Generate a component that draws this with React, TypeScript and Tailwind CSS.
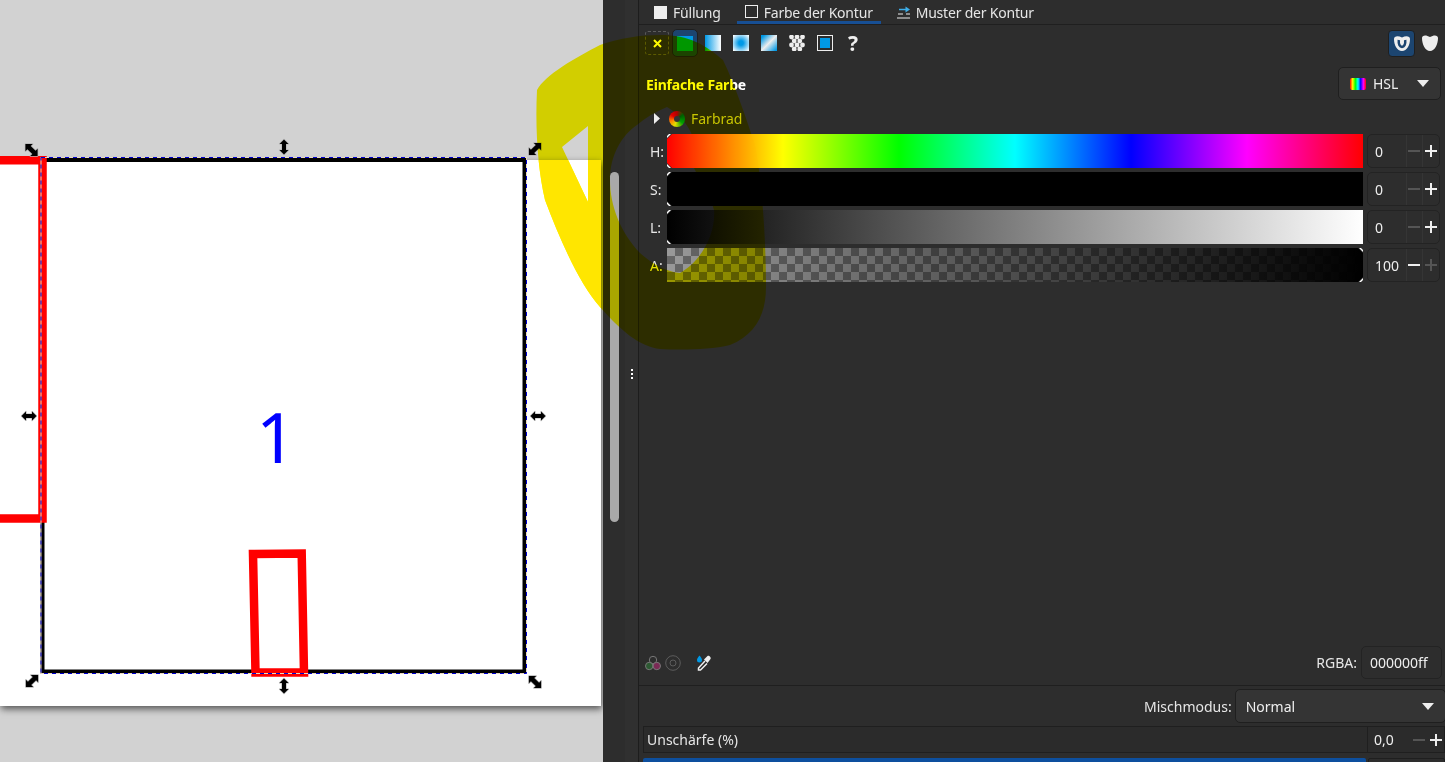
import React from 'react';

const blobPath =
  'M537,90 C545,75 575,58 600,45 C620,38 640,35 660,35 C690,35 705,45 723,60 C735,85 745,115 755,145 C762,180 766,240 766,287 C766,315 755,335 730,345 C710,350 680,350 660,349 C640,347 620,330 600,307 C580,285 560,240 545,200 C538,170 535,130 537,90 Z ' +
  'M588,126 L562,147 L588,202 Z ' +
  'M667,107 C680,115 688,125 692,135 C694,150 694,158 694,168 C702,185 710,195 714,210 C716,235 700,262 680,273 C665,272 650,262 640,253 C620,232 610,205 610,180 C610,155 622,135 637,125 C645,118 655,112 667,107 Z';

const Handle = ({ x, y, rot, scale = 1 }: { x: number; y: number; rot: number; scale?: number }) => (
  <path
    transform={`translate(${x} ${y}) rotate(${rot}) scale(${scale})`}
    d="M-7.5,0 L-3,-4.5 L-3,-2 L3,-2 L3,-4.5 L7.5,0 L3,4.5 L3,2 L-3,2 L-3,4.5 Z"
    fill="#000"
    stroke="#b5b5b5"
    strokeWidth="1.2"
    paintOrder="stroke"
    strokeLinejoin="round"
  />
);

const Canvas = () => (
  <div className="relative h-full w-[603px] shrink-0 overflow-hidden bg-[#d2d2d2]">
    <div className="absolute left-0 top-[160px] h-[546px] w-[601px] bg-white shadow-[1px_3px_7px_rgba(0,0,0,0.6)]" />
    <svg className="absolute inset-0" width="603" height="762" viewBox="0 0 603 762">
      <rect x="42.5" y="160" width="482" height="511.5" fill="none" stroke="#000" strokeWidth="4" />
      <path d="M-20,160.2 H42.5 V518.5 H-20" fill="none" stroke="#ff0000" strokeWidth="8.5" />
      <polygon points="253,554 301.7,553.5 304,672.5 255.5,672.5" fill="none" stroke="#ff0000" strokeWidth="8.5" />
      <rect x="41" y="157.5" width="485.5" height="516" fill="none" stroke="#e8d8c0" strokeWidth="1" />
      <rect x="41" y="157.5" width="485.5" height="516" fill="none" stroke="#0000d0" strokeWidth="1" strokeDasharray="4 4" />
      <Handle x={31.5} y={150} rot={45} scale={1.15} />
      <Handle x={284} y={147} rot={90} />
      <Handle x={535} y={149} rot={-45} scale={1.15} />
      <Handle x={29} y={416} rot={0} />
      <Handle x={538} y={416} rot={0} />
      <Handle x={32} y={681} rot={-45} scale={1.15} />
      <Handle x={284} y={686} rot={90} />
      <Handle x={535} y={682} rot={45} scale={1.15} />
      <text x="276" y="463" textAnchor="middle" fill="#0000ff" fontSize="70" fontFamily="'Noto Sans', sans-serif">
        1
      </text>
    </svg>
  </div>
);

const Divider = () => (
  <div className="flex h-full w-[35px] shrink-0 bg-[#2d2d2d]">
    <div className="ml-[7px] mt-[172px] h-[350px] w-[9px] rounded-full bg-[#a9a9a9]" />
    <div className="ml-[6px] flex h-full w-[13px] flex-col items-center gap-[2px] bg-[#303030] pt-[369px]">
      <span className="h-[2px] w-[2px] bg-white" />
      <span className="h-[2px] w-[2px] bg-white" />
      <span className="h-[2px] w-[2px] bg-white" />
    </div>
  </div>
);

const Caret = () => (
  <svg width="12" height="7" viewBox="0 0 12 7" className="shrink-0">
    <path d="M0,0 H12 L6,7 Z" fill="#eeeeee" />
  </svg>
);

const Minus = ({ dim }: { dim?: boolean }) => (
  <span className={`block h-[2px] w-[12px] ${dim ? 'bg-[#555555]' : 'bg-[#eeeeee]'}`} />
);

const Plus = ({ dim }: { dim?: boolean }) => (
  <span className="relative block h-[12px] w-[12px]">
    <span className={`absolute left-0 top-[5px] h-[2px] w-[12px] ${dim ? 'bg-[#555555]' : 'bg-[#eeeeee]'}`} />
    <span className={`absolute left-[5px] top-0 h-[12px] w-[2px] ${dim ? 'bg-[#555555]' : 'bg-[#eeeeee]'}`} />
  </span>
);

const Spin = ({ value, minusDim, plusDim }: { value: string; minusDim?: boolean; plusDim?: boolean }) => (
  <div className="flex h-[34px] w-[73px] shrink-0 items-stretch rounded-[5px] border border-[#232323] bg-[#2d2d2d]">
    <div className="flex w-[38px] items-center pl-[7px] text-[14px] text-[#eeeeee]">{value}</div>
    <div className="flex w-[17px] items-center justify-center border-l border-[#353535]">
      <Minus dim={minusDim} />
    </div>
    <div className="flex w-[17px] items-center justify-center border-l border-[#353535]">
      <Plus dim={plusDim} />
    </div>
  </div>
);

const Notch = ({ flip, bottom }: { flip?: boolean; bottom?: boolean }) => (
  <svg
    width="5"
    height="5"
    viewBox="0 0 5 5"
    className={`absolute ${flip ? 'right-0' : 'left-0'} ${bottom ? 'bottom-0' : 'top-0'} ${flip ? '-scale-x-100' : ''} ${bottom ? '-scale-y-100' : ''}`}
  >
    <path d="M0,0 H5 L0,5 Z" fill="#2d2d2d" />
    <path d="M0,2 L2,0 H4 L0,4 Z" fill="#ffffff" />
  </svg>
);

const Slider = ({
  label,
  bar,
  value,
  minusDim,
  plusDim,
  end,
}: {
  label: string;
  bar: string;
  value: string;
  minusDim?: boolean;
  plusDim?: boolean;
  end?: boolean;
}) => (
  <div className="flex h-[34px] items-center pl-[11px] pr-[5px]">
    <div className="w-[17px] text-[14px] text-[#e6e6e6]">{label}</div>
    <div className={`relative mr-[4px] h-[34px] w-[696px] shrink-0 ${bar}`}>
      <Notch flip={end} />
      <Notch flip={end} bottom />
    </div>
    <Spin value={value} minusDim={minusDim} plusDim={plusDim} />
  </div>
);

const Panel = () => (
  <div className="h-full flex-1 overflow-hidden border-l border-[#1d1d1d] bg-[#2d2d2d] font-['Noto_Sans',sans-serif] text-[14px] text-[#e6e6e6]">
    {/* tabs */}
    <div className="flex h-[25px] border-b border-[#1f1f1f] pl-[15px] tracking-[-0.2px]">
      <div className="flex h-[24px] items-center gap-[6px]">
        <span className="h-[13px] w-[13px] bg-[#eeeeee]" />
        <span>Füllung</span>
      </div>
      <div className="ml-[16px] flex h-[24px] w-[144px] items-start gap-[6px] border-b-[3px] border-[#174f94] pl-[8px] pt-[2px]">
        <span className="mt-[3px] h-[13px] w-[13px] border-[1.5px] border-[#eeeeee]" />
        <span>Farbe der Kontur</span>
      </div>
      <div className="ml-[16px] flex h-[24px] items-center gap-[6px]">
        <svg width="13" height="13" viewBox="0 0 13 13">
          <path d="M2,3.5 H9" stroke="#3daee9" strokeWidth="1.5" />
          <path d="M8.5,0.5 L13,3.5 L8.5,6.5 Z" fill="#3daee9" />
          <path d="M1,8 H6 M9,8 H13 M0,12 H13" stroke="#eeeeee" strokeWidth="1" />
        </svg>
        <span>Muster der Kontur</span>
      </div>
    </div>

    {/* paint type toolbar */}
    <div className="mt-[4px] flex h-[28px] items-center pl-[6px] pr-[7px]">
      <div className="flex h-[24px] w-[24px] items-center justify-center rounded-[3px] border border-dashed border-[#5c5c5c]">
        <svg width="9" height="9" viewBox="0 0 9 9">
          <path d="M1,1 L8,8 M8,1 L1,8" stroke="#ffffff" strokeWidth="2" />
        </svg>
      </div>
      <div className="ml-[3px] flex h-[28px] w-[26px] items-center justify-center rounded-[5px] border border-[#1f1f1f] bg-[#1c4570]">
        <span className="h-[15px] w-[16px] bg-[#0099e6]" />
      </div>
      <span className="ml-[7px] h-[16px] w-[16px] bg-[linear-gradient(to_right,#0099e6,#ffffff)]" />
      <span className="ml-[12px] h-[16px] w-[16px] bg-[radial-gradient(circle,#0099e6_20%,#ffffff_95%)]" />
      <span className="ml-[12px] h-[16px] w-[16px] bg-[linear-gradient(135deg,#0099e6_10%,#eeeeee_50%,#0099e6_95%)]" />
      <svg width="16" height="16" viewBox="0 0 16 16" className="ml-[12px]">
        <g fill="#eeeeee">
          <circle cx="2.5" cy="2" r="2.4" />
          <circle cx="8" cy="2" r="2.4" />
          <circle cx="13.5" cy="2" r="2.4" />
          <circle cx="5.2" cy="6" r="2.4" />
          <circle cx="10.8" cy="6" r="2.4" />
          <circle cx="2.5" cy="10" r="2.4" />
          <circle cx="8" cy="10" r="2.4" />
          <circle cx="13.5" cy="10" r="2.4" />
          <circle cx="5.2" cy="14" r="2.4" />
          <circle cx="10.8" cy="14" r="2.4" />
        </g>
      </svg>
      <span className="ml-[12px] flex h-[16px] w-[16px] items-center justify-center border border-[#eeeeee]">
        <span className="h-[10px] w-[10px] bg-[#0099e6]" />
      </span>
      <span className="ml-[12px] w-[16px] text-center text-[21px] font-bold leading-none text-[#eeeeee]">?</span>
      <div className="ml-auto flex h-[27px] w-[27px] items-center justify-center rounded-[4px] border border-[#1f1f1f] bg-[#1c4570]">
        <svg width="16" height="15" viewBox="0 0 16 15">
          <path d="M0,3 C0,0 4,-0.5 8,1.5 C12,-0.5 16,0 16,3 C16,9 13,15 8,15 C3,15 0,9 0,3 Z" fill="#eeeeee" />
          <path d="M4.8,4 C4.3,8.5 6,11 8,11 C10,11 11.7,8.5 11.2,4" fill="none" stroke="#1c4570" strokeWidth="2.5" />
        </svg>
      </div>
      <svg width="16" height="16" viewBox="0 0 16 16" className="ml-[7px]">
        <path d="M0,3 C0,0 4,-0.5 8,2 C12,-0.5 16,0 16,3 C16,9 13,16 8,16 C3,16 0,9 0,3 Z" fill="#eeeeee" />
      </svg>
    </div>

    {/* colour header */}
    <div className="mt-[10px] flex h-[33px] items-center pl-[7px] pr-[4px]">
      <span className="mt-[2px] font-bold tracking-[-0.2px] text-white">Einfache Farbe</span>
      <div className="ml-auto flex h-[33px] w-[103px] items-center rounded-[5px] border border-[#1f1f1f] bg-[#343434] pl-[11px] pr-[11px]">
        <span className="h-[12px] w-[16px] rounded-[2px] bg-[linear-gradient(to_right,#f00,#ff0,#0f0,#0ff,#00f,#f0f,#f00)]" />
        <span className="ml-[7px] text-[#eeeeee]">HSL</span>
        <span className="ml-auto">
          <Caret />
        </span>
      </div>
    </div>

    <div className="mt-[7px] flex h-[23px] items-center pl-[15px]">
      <svg width="6" height="11" viewBox="0 0 6 11">
        <path d="M0,0 L6,5.5 L0,11 Z" fill="#eeeeee" />
      </svg>
      <span className="ml-[9px] h-[16px] w-[16px] rounded-full bg-[conic-gradient(#b00000,#006000_15%,#00a000_35%,#e0e000_55%,#ff8000_70%,#e00000_85%,#b00000)] p-[5px]">
        <span className="block h-full w-full rounded-full bg-[#333333]" />
      </span>
      <span className="ml-[6px] text-[#c8c8c8]">Farbrad</span>
    </div>

    <div className="mt-[4px] flex flex-col gap-[4px]">
      <Slider label="H:" value="0" minusDim bar="bg-[linear-gradient(to_right,#f00,#ff0,#0f0,#0ff,#00f,#f0f,#f00)]" />
      <Slider label="S:" value="0" minusDim bar="bg-black" />
      <Slider label="L:" value="0" minusDim bar="bg-[linear-gradient(to_right,#000,#fff)]" />
      <Slider
        label="A:"
        value="100"
        plusDim
        end
        bar="bg-[linear-gradient(to_right,transparent,#000),repeating-conic-gradient(#666666_0_25%,#999999_0_50%)] bg-[length:100%_100%,16px_16px]"
      />
    </div>

    {/* rgba row */}
    <div className="mt-[364px] flex h-[33px] items-center pl-[6px] pr-[3px]">
      <svg width="16" height="16" viewBox="0 0 16 16">
        <circle cx="8" cy="5" r="3.7" fill="none" stroke="#777777" strokeWidth="1" />
        <circle cx="4.2" cy="11" r="3.7" fill="#2d5a33" stroke="#777777" strokeWidth="1" />
        <circle cx="11.8" cy="11" r="3.7" fill="#7a2a55" stroke="#777777" strokeWidth="1" />
      </svg>
      <svg width="16" height="16" viewBox="0 0 16 16" className="ml-[4px]">
        <circle cx="8" cy="8" r="7.3" fill="none" stroke="#5c5c5c" strokeWidth="1" />
        <circle cx="8" cy="8" r="3" fill="none" stroke="#5c5c5c" strokeWidth="1" />
      </svg>
      <svg width="16" height="16" viewBox="0 0 16 16" className="ml-[15px]">
        <path d="M3.5,0.5 C5,2.5 6,3.5 6,5 A2.5,2.5 0 0 1 1,5 C1,3.5 2,2.5 3.5,0.5 Z" fill="#0099e6" />
        <path d="M9,6 L2.5,13 L2.5,15 L4.5,15 L11,8.5" fill="none" stroke="#eeeeee" strokeWidth="1.5" />
        <path d="M8,4.5 L11.5,1 C13,0 15.5,2.5 14.5,4 L11.5,8 Z" fill="#eeeeee" />
      </svg>
      <span className="ml-auto text-[#e6e6e6]">RGBA:</span>
      <div className="ml-[4px] flex h-[33px] w-[81px] items-center rounded-[5px] border border-[#232323] pl-[8px] text-[#eeeeee]">
        000000ff
      </div>
    </div>

    <div className="mt-[6px] border-t border-[#1f1f1f]" />

    {/* blend mode */}
    <div className="mt-[3px] flex h-[34px] items-center">
      <span className="ml-[505px]">Mischmodus:</span>
      <div className="ml-[3px] mr-[-1px] flex h-[34px] flex-1 items-center rounded-[5px] border border-[#1f1f1f] bg-[#343434] pl-[10px] pr-[11px] text-[#eeeeee]">
        <span className="mt-[1px]">Normal</span>
        <span className="ml-auto">
          <Caret />
        </span>
      </div>
    </div>

    {/* blur */}
    <div className="ml-[4px] mt-[3px] flex h-[27px] items-center border border-[#1f1f1f] bg-[#2b2b2b]">
      <span className="flex-1 pl-[3px]">Unschärfe (%)</span>
      <div className="flex h-full w-[77px] items-center border-l border-[#1f1f1f]">
        <span className="ml-[6px] w-[39px] text-[#eeeeee]">0,0</span>
        <Minus dim />
        <span className="ml-[5px]">
          <Plus />
        </span>
      </div>
    </div>

    <div className="ml-[4px] mt-[5px] flex h-[20px]">
      <div className="h-full w-[723px] rounded-[2px] bg-[#0d4f9e]" />
      <div className="ml-[2px] h-full flex-1 rounded-[2px] border border-[#1f1f1f]" />
    </div>
  </div>
);

export default function App() {
  return (
    <div className="relative flex h-[762px] w-[1445px] overflow-hidden">
      <Canvas />
      <Divider />
      <Panel />
      {/* translucent yellow shape lying over the whole window */}
      <svg
        className="pointer-events-none absolute inset-0 mix-blend-multiply"
        width="1445"
        height="762"
        viewBox="0 0 1445 762"
      >
        <defs>
          <clipPath id="page">
            <rect x="0" y="160" width="601" height="546" />
          </clipPath>
        </defs>
        <path d={blobPath} fillRule="evenodd" fill="#fffb00" />
        <path d={blobPath} fillRule="evenodd" fill="#ffe600" clipPath="url(#page)" />
      </svg>
    </div>
  );
}
